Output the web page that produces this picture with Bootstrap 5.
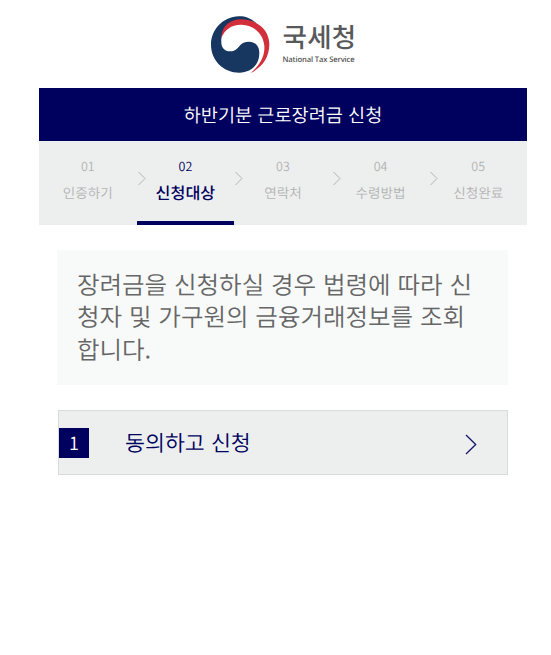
<!DOCTYPE html>
<html lang="ko">
<head>
<meta charset="utf-8">
<meta name="viewport" content="width=device-width, initial-scale=1">
<title>국세청 - 하반기분 근로장려금 신청</title>
<link href="https://cdn.jsdelivr.net/npm/bootstrap@5.3.0/dist/css/bootstrap.min.css" rel="stylesheet">
<style>
:root{--navy:#00005e;--panel:#edefee;--muted:#b2b3b3}
body{font-family:"Noto Sans CJK KR",sans-serif;font-weight:350;background:#fff;overflow:hidden;text-rendering:geometricPrecision}
.page-wrap{width:488px;margin-left:39px}
.brand{height:88px;padding:16px 0 0 172px}
.brand-copy{margin-left:12.5px}
.brand-name{font-size:26.5px;line-height:32px;font-weight:500;color:#58595b;letter-spacing:.3px;margin-top:4px}
.brand-sub{font-family:"Open Sans",sans-serif;font-weight:600;font-size:7.6px;line-height:10px;color:#555;margin-top:3px;letter-spacing:-.12px;white-space:nowrap}
.title-bar{height:53px;background:var(--navy);font-size:18.6px;line-height:53px;font-weight:350}
.steps{height:83.5px;background:var(--panel)}
.step{width:20%;color:var(--muted);padding-top:15px;font-size:13.6px;line-height:20px;white-space:nowrap}
.step-no{font-size:12.5px}
.step-label{margin-top:6px}
.step.active{color:var(--navy);border-bottom:4px solid var(--navy)}
.step.active .step-label{font-size:16.2px;font-weight:500}
.step-arrow{right:-10px;top:30px}
.notice{margin:25.5px 19px 0 18px;height:134.5px;background:#f8faf9;color:#666;font-size:24.5px;line-height:32.5px;padding:18.5px 20px}
.apply{margin:25.5px 19px 0;height:65px;background:var(--panel);border:1px solid #d9dbda;color:var(--navy)}
.apply-no{width:30px;height:30px;background:var(--navy);font-size:18px;line-height:30px}
.apply-text{font-size:21.7px;margin-left:36px;line-height:32px}
.apply-arrow{margin-right:30px;margin-top:4px}
</style>
<script src="https://cdn.jsdelivr.net/npm/bootstrap@5.3.0/dist/js/bootstrap.bundle.min.js"></script>
</head>
<body>
<div class="page-wrap">
  <header class="brand d-flex align-items-start">
    <svg class="flex-shrink-0" width="59" height="58" viewBox="18 18 177 174" aria-label="정부 상징">
      <path fill="#173660" d="M155 41C137 23 117 18 101 19C55 20 18 58 18 104C18 151 56 188 103 188C139 188 163 164 163 129C163 108 151 95 132 95C109 95 105 108 95 117C80 131 49 124 49 98C48 65 65 34 108 32C128 31 144 35 155 41Z"/>
      <path fill="#d22f3b" d="M49 84C50 47 76 28 108 28C156 28 193 59 193 103C193 144 170 173 137 189C168 162 180 135 178 107C174 70 147 46 110 44C80 43 59 59 49 84Z"/>
    </svg>
    <div class="brand-copy">
      <div class="brand-name">국세청</div>
      <div class="brand-sub">National Tax Service</div>
    </div>
  </header>
  <h1 class="title-bar text-white text-center m-0">하반기분 근로장려금 신청</h1>
  <nav class="steps d-flex text-center">
    <div class="step position-relative"><div class="step-no">01</div><div class="step-label">인증하기</div>
      <svg class="step-arrow position-absolute" width="10" height="15" viewBox="0 0 10 15" fill="none" stroke="#b2b3b3"><path d="M1.5 1L8 7.5L1.5 14"/></svg></div>
    <div class="step position-relative active"><div class="step-no">02</div><div class="step-label">신청대상</div>
      <svg class="step-arrow position-absolute" width="10" height="15" viewBox="0 0 10 15" fill="none" stroke="#b2b3b3"><path d="M1.5 1L8 7.5L1.5 14"/></svg></div>
    <div class="step position-relative"><div class="step-no">03</div><div class="step-label">연락처</div>
      <svg class="step-arrow position-absolute" width="10" height="15" viewBox="0 0 10 15" fill="none" stroke="#b2b3b3"><path d="M1.5 1L8 7.5L1.5 14"/></svg></div>
    <div class="step position-relative"><div class="step-no">04</div><div class="step-label">수령방법</div>
      <svg class="step-arrow position-absolute" width="10" height="15" viewBox="0 0 10 15" fill="none" stroke="#b2b3b3"><path d="M1.5 1L8 7.5L1.5 14"/></svg></div>
    <div class="step"><div class="step-no">05</div><div class="step-label">신청완료</div></div>
  </nav>
  <p class="notice mb-0">장려금을 신청하실 경우 법령에 따라 신<br>청자 및 가구원의 금융거래정보를 조회<br>합니다.</p>
  <a href="#" class="apply d-flex align-items-center text-decoration-none">
    <span class="apply-no text-white text-center">1</span>
    <span class="apply-text">동의하고 신청</span>
    <svg class="apply-arrow ms-auto" width="12" height="21" viewBox="0 0 12 21" fill="none" stroke="#15156b" stroke-width="1.3"><path d="M1 1L10.7 10.5L1 20"/></svg>
  </a>
</div>
</body>
</html>
